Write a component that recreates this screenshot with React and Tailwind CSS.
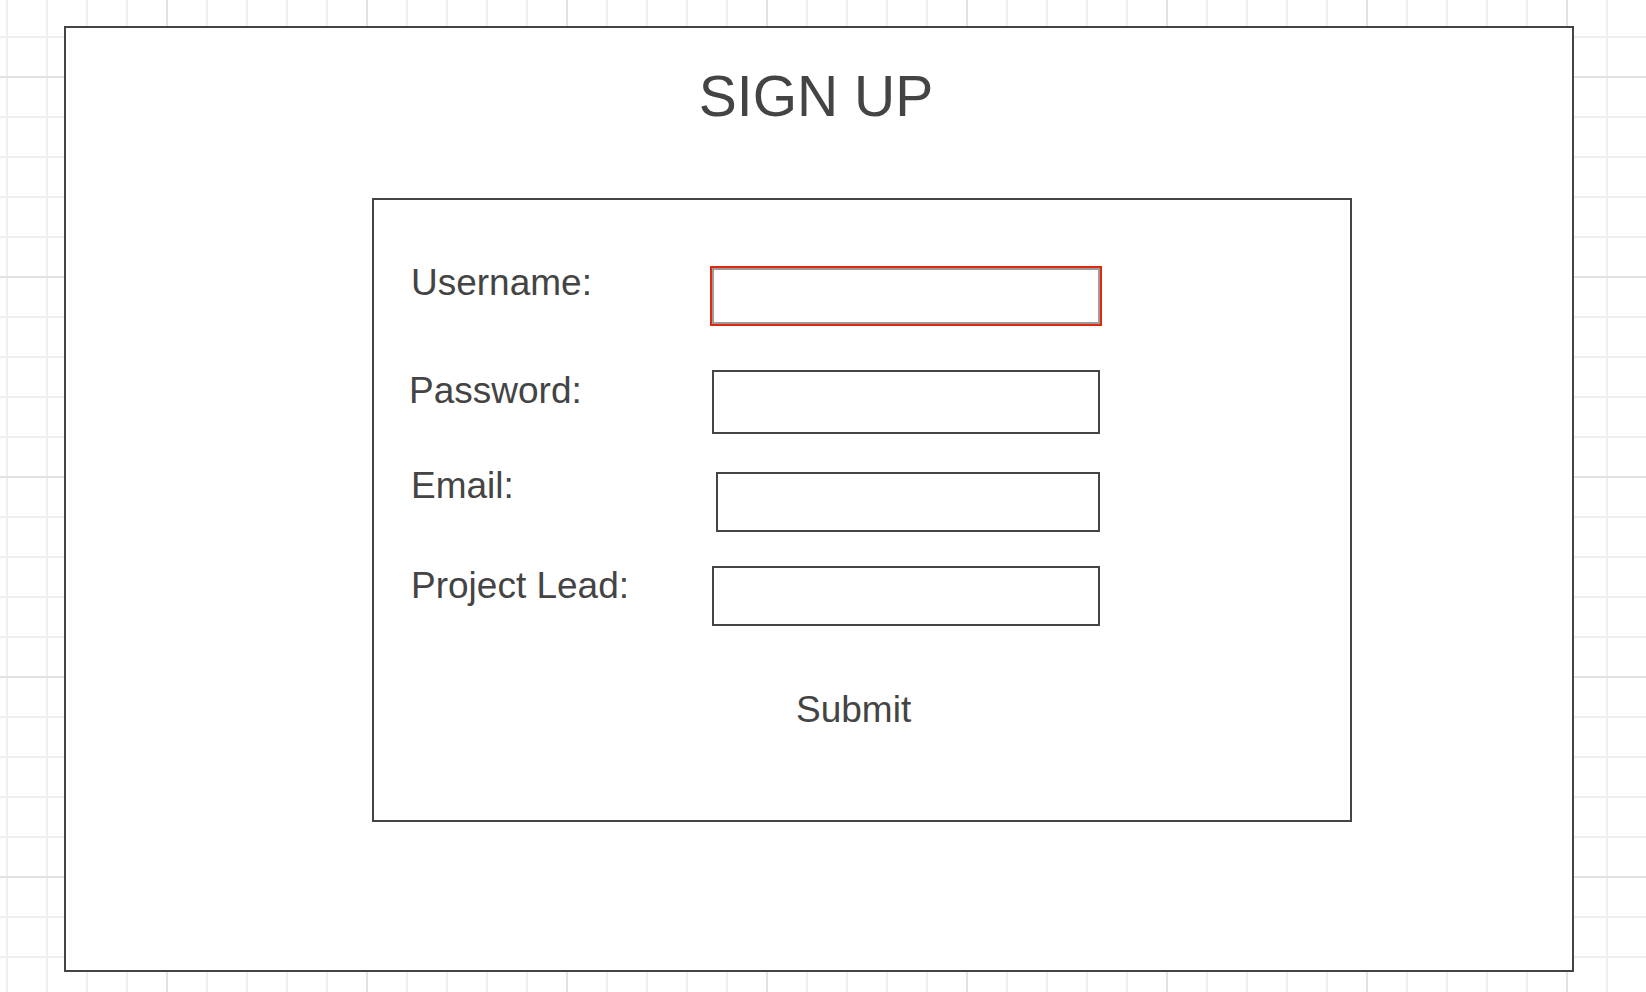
import React from 'react';

const SignUp = () => {
  return (
    <div className="min-h-screen w-full bg-white bg-[linear-gradient(to_right,#e2e2e2_2px,transparent_2px),linear-gradient(to_bottom,#e2e2e2_2px,transparent_2px),linear-gradient(to_right,#efefef_2px,transparent_2px),linear-gradient(to_bottom,#efefef_2px,transparent_2px)] bg-[size:200px_200px,200px_200px,40px_40px,40px_40px] bg-[position:166px_76px,166px_76px,6px_36px,6px_36px] pt-[26px] pl-[64px] font-['Liberation_Sans',Arial,sans-serif] text-[#444444]">
      <div className="w-[1510px] h-[946px] border-2 border-[#444444] bg-white">
        {/* title */}
        <h1 className="mt-[40px] pr-[6px] text-center text-[57px] leading-[56px] font-normal">SIGN UP</h1>

        {/* form box */}
        <form
          className="mt-[74px] ml-[306px] w-[980px] h-[624px] border-2 border-[#444444]"
          onSubmit={(e) => e.preventDefault()}
        >
          {/* Username */}
          <div className="flex items-start mt-[62px]">
            <label className="w-[336px] pl-[37px] mt-[3px] text-[37px] leading-[36px]">Username:</label>
            <div className="mt-[4px] w-[392px] h-[60px] border-2 border-[#e0290f]">
              <input className="block w-full h-full border-2 border-[#9c9c9c] bg-white outline-none" />
            </div>
          </div>

          {/* Password */}
          <div className="flex items-start mt-[44px]">
            <label className="w-[336px] pl-[35px] mt-[3px] text-[37px] leading-[36px]">Password:</label>
            <input
              type="password"
              className="block ml-[2px] w-[388px] h-[64px] border-2 border-[#444444] bg-white outline-none"
            />
          </div>

          {/* Email */}
          <div className="flex items-start mt-[34px]">
            <label className="w-[336px] pl-[37px] text-[37px] leading-[36px]">Email:</label>
            <input
              type="email"
              className="block mt-[4px] ml-[6px] w-[384px] h-[60px] border-2 border-[#444444] bg-white outline-none"
            />
          </div>

          {/* Project Lead */}
          <div className="flex items-start mt-[34px]">
            <label className="w-[336px] pl-[37px] mt-[2px] text-[37px] leading-[36px]">Project Lead:</label>
            <input className="block ml-[2px] w-[388px] h-[60px] border-2 border-[#444444] bg-white outline-none" />
          </div>

          <button type="submit" className="block mt-[66px] ml-[422px] text-[37px] leading-[36px] cursor-pointer">
            Submit
          </button>
        </form>
      </div>
    </div>
  );
};

export default function App() {
  return <SignUp />;
}
